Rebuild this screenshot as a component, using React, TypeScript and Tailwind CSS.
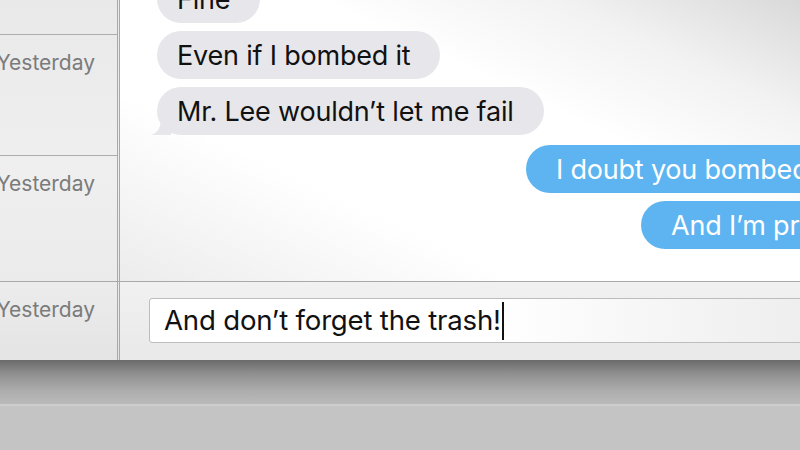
import { ReactNode } from "react";

const font = { fontFamily: "Inter, 'Open Sans', sans-serif" };

const SideRow = ({ h, label, last }: { h: string; label?: string; last?: boolean }) => (
  <div
    className={`${h} flex justify-end overflow-hidden pr-[22px] pt-[16px] ${
      last ? "" : "border-b border-[#acacac]"
    }`}
  >
    {label && (
      <span className="shrink-0 whitespace-nowrap text-[21px] leading-[24px] text-[#7b7b7b]">
        {label}
      </span>
    )}
  </div>
);

const Bubble = ({
  children,
  blue,
  className = "",
  tail,
}: {
  children: ReactNode;
  blue?: boolean;
  className?: string;
  tail?: boolean;
}) => (
  <div
    className={`relative inline-flex h-[48px] shrink-0 items-center whitespace-nowrap rounded-[24px] pt-[2px] text-[27px] tracking-[-0.2px] ${
      blue
        ? "bg-[#5db4f1] pl-[30px] pr-[30px] text-white"
        : "bg-[#e7e7eb] pl-[20px] pr-[30px] text-[#111]"
    } ${className}`}
  >
    {tail && (
      <svg
        className="absolute -left-[6px] bottom-0"
        width="20"
        height="16"
        viewBox="0 0 20 16"
      >
        <path d="M20 0 L20 16 L0 16 C6 14 9 10 10 2 Z" fill="#e7e7eb" />
      </svg>
    )}
    {children}
  </div>
);

export default function App() {
  return (
    <div
      className="flex h-[450px] w-[800px] flex-col overflow-hidden bg-[#c4c4c4]"
      style={font}
    >
      {/* window */}
      <div className="grid h-[360px] shrink-0 grid-cols-[120px_1fr] grid-rows-[281px_79px]">
        {/* sidebar top */}
        <div className="flex flex-col border-r-[3px] border-double border-[#a9a9a9] bg-[linear-gradient(180deg,#e9e9e9,#efefef_60%,#ebebeb)]">
          <SideRow h="h-[35px]" />
          <SideRow h="h-[121px]" label="Yesterday" />
          <SideRow h="h-[125px]" label="Yesterday" last />
        </div>

        {/* messages */}
        <div className="relative flex flex-col overflow-hidden bg-[linear-gradient(205deg,#d4d4d4_0%,#f2f2f2_22%,#ffffff_40%,#ffffff_70%,#ececec_100%)] pl-[37px]">
          <div className="flex flex-col items-start gap-[8px]">
            <Bubble className="-mt-[25px]">Fine</Bubble>
            <Bubble>Even if I bombed it</Bubble>
            <Bubble tail>Mr. Lee wouldn’t let me fail</Bubble>
          </div>
          <div className="mt-[10px] flex flex-col items-start gap-[8px]">
            <Bubble blue className="ml-[369px]">
              I doubt you bombed it
            </Bubble>
            <Bubble blue className="ml-[484px] pl-[26px]">
              And I’m proud of you
            </Bubble>
          </div>
        </div>

        {/* sidebar bottom */}
        <div className="flex flex-col border-r-[3px] border-t border-double border-[#a9a9a9] bg-[linear-gradient(180deg,#ececec,#e4e4e4)]">
          <SideRow h="h-[79px]" label="Yesterday" last />
        </div>

        {/* compose */}
        <div className="flex items-start border-t border-[#a9a9a9] bg-[linear-gradient(180deg,#f1f1f1,#e9e9e9)] pl-[29px] pt-[16px]">
          <div className="flex h-[45px] w-[700px] items-center rounded-[3px] border border-[#bdbdbd] bg-[linear-gradient(90deg,#ffffff_0%,#ffffff_50%,#f3f3f3_80%,#ececec_100%)] pl-[14px]">
            <span className="whitespace-nowrap text-[27.6px] tracking-[-0.2px] text-[#111]">
              And don’t forget the trash!
            </span>
            <span className="ml-[1px] h-[38px] w-[2px] bg-[#111]" />
          </div>
        </div>
      </div>

      {/* shadow under window */}
      <div className="h-[44px] shrink-0 bg-[linear-gradient(180deg,#6a6a6a_0%,#8e8e8e_30%,#adadad_70%,#bababa_100%)]" />
      <div className="h-[2px] shrink-0 bg-[#cdcdcd]" />
      <div className="flex-1 bg-[#c4c4c4]" />
    </div>
  );
}
